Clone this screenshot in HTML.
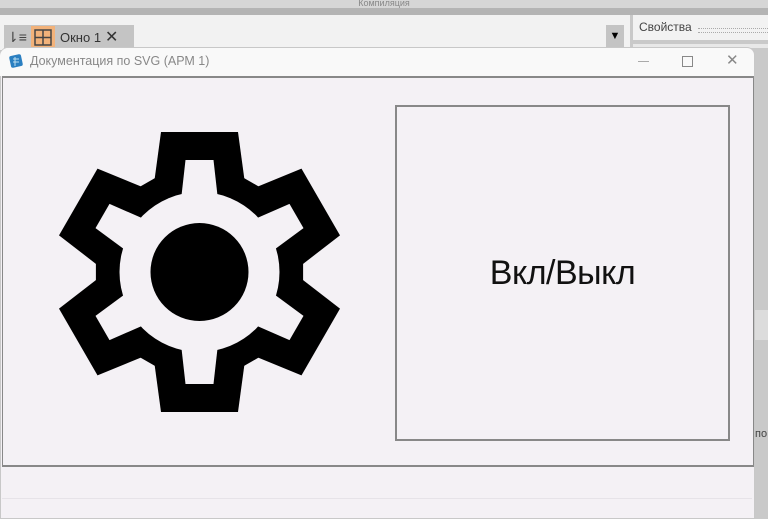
<!DOCTYPE html>
<html><head><meta charset="utf-8"><style>
body{margin:0;width:768px;height:512px;overflow:hidden;background:#c9c9c9;font-family:"Liberation Sans",sans-serif;position:relative}
.a{position:absolute}
</style></head><body>
<div class="a" style="left:0;top:0;width:768px;height:8px;background:#d6d6d6;font-size:9px;color:#888;text-align:center;line-height:6px;overflow:hidden">Компиляция</div>
<div class="a" style="left:0;top:8px;width:768px;height:7px;background:#b4b4b4"></div>
<div class="a" style="left:0;top:15px;width:630px;height:35px;background:#f2f2f2"></div>
<div class="a" style="left:4px;top:25px;width:26px;height:25px;background:#c4c4c4;font-size:14px;text-align:center;line-height:24px;color:#444">⇂≡</div>
<div class="a" style="left:30px;top:25px;width:104px;height:25px;background:#c4c4c4"></div>
<div class="a" style="left:31px;top:26px;width:24px;height:23px;background:#f2b27a"></div>
<svg class="a" style="left:34px;top:29px" width="18" height="17"><rect x="1" y="1" width="16" height="15" fill="none" stroke="#444" stroke-width="1.5"/><line x1="9" y1="1" x2="9" y2="16" stroke="#444" stroke-width="1.5"/><line x1="1" y1="8.5" x2="17" y2="8.5" stroke="#444" stroke-width="1.5"/></svg>
<div class="a" style="left:60px;top:30px;font-size:13px;color:#333">Окно 1</div>
<div class="a" style="left:105px;top:27px;font-size:16px;color:#333">✕</div>
<div class="a" style="left:606px;top:25px;width:18px;height:22px;background:#c4c4c4;font-size:11px;text-align:center;line-height:22px">▼</div>
<div class="a" style="left:633px;top:15px;width:135px;height:25px;background:#f2f2f2"></div>
<div class="a" style="left:639px;top:20px;font-size:12px;color:#444">Свойства</div>
<div class="a" style="left:698px;top:28px;width:70px;height:3px;border-top:1px dotted #aaa;border-bottom:1px dotted #aaa"></div>
<div class="a" style="left:633px;top:44px;width:135px;height:4px;background:#e8e8e8"></div>
<div class="a" style="left:755px;top:310px;width:13px;height:30px;background:#dcdcdc"></div>
<div class="a" style="left:755px;top:428px;font-size:11px;color:#444">по</div>
<div class="a" style="left:0;top:47px;width:753px;height:470px;background:#f4f1f5;border:1px solid #c8c8c8;border-radius:8px 8px 0 0"></div>
<div class="a" style="left:0;top:48px;width:754px;height:28px;background:#f9f9f9;border-radius:8px 8px 0 0"></div>
<svg class="a" style="left:8px;top:53px" width="16" height="16"><rect x="2" y="2" width="12" height="12" rx="2" fill="#2a7fc1" transform="rotate(-12 8 8)"/><path d="M5 6h6M5 9h6M7 4v9" stroke="#bde" stroke-width="1"/></svg>
<div class="a" style="left:30px;top:54px;font-size:12.5px;color:#888">Документация по SVG (АРМ 1)</div>
<div class="a" style="left:638px;top:61px;width:11px;height:1px;background:#aaa"></div>
<div class="a" style="left:682px;top:56px;width:9px;height:9px;border:1px solid #888"></div>
<div class="a" style="left:726px;top:51px;font-size:15px;color:#888">✕</div>
<div class="a" style="left:2px;top:76px;width:750px;height:387px;border:1px solid #888;border-width:2px 1px 2px 1px;background:#f4f1f5"></div>
<div class="a" style="left:2px;top:498px;width:750px;height:1px;background:#e6e3e8"></div>
<div class="a" style="left:395px;top:105px;width:331px;height:332px;border:2px solid #888"></div>
<div class="a" style="left:395px;top:254px;width:335px;text-align:center;font-size:34px;color:#111;letter-spacing:-0.5px">Вкл/Выкл</div>
<svg class="a" style="left:0;top:0" width="400" height="460">
<g transform="translate(199.5 272)">
<g fill="#000">
<polygon points="-44.4,-94 44.4,-94 59.2,-85.5 103.6,-8.5 103.6,8.5 59.2,85.5 44.4,94 -44.4,94 -59.2,85.5 -103.6,8.5 -103.6,-8.5 -59.2,-85.5"/>
<g id="t"><polygon points="-38.5,-140 38.5,-140 45,-92 -45,-92"/></g>
<use href="#t" transform="rotate(60)"/><use href="#t" transform="rotate(120)"/><use href="#t" transform="rotate(180)"/><use href="#t" transform="rotate(240)"/><use href="#t" transform="rotate(300)"/>
</g>
<g fill="#f4f1f5">
<circle r="80"/>
<g id="w"><polygon points="-14,-112 14,-112 18.5,-72 -18.5,-72"/></g>
<use href="#w" transform="rotate(60)"/><use href="#w" transform="rotate(120)"/><use href="#w" transform="rotate(180)"/><use href="#w" transform="rotate(240)"/><use href="#w" transform="rotate(300)"/>
</g>
<circle r="49" fill="#000"/>
</g></svg>
</body></html>
